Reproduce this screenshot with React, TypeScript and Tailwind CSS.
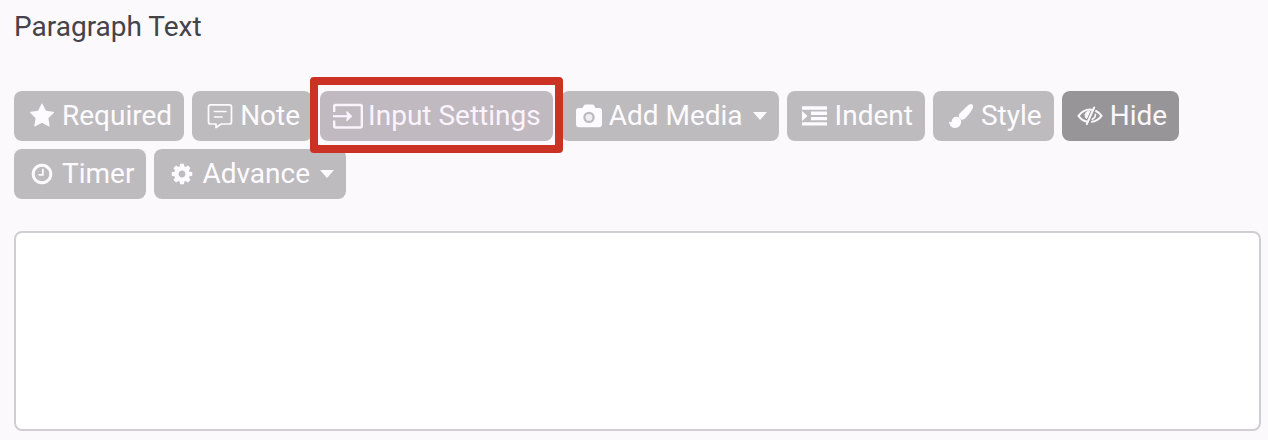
import type { ReactNode } from 'react';

type Tool = {
  label: string;
  icon: ReactNode;
  menu?: boolean;
  active?: boolean;
  highlighted?: boolean;
};

const StarIcon = (
  <svg viewBox="0 0 1664 1792" className="h-[26px] w-6" fill="currentColor" aria-hidden="true">
    <path d="M1664 647q0 22-26 48l-363 354 86 500q1 7 1 20 0 21-10.5 35.5t-30.5 14.5q-19 0-40-12l-449-236-449 236q-22 12-40 12-21 0-31.5-14.5t-10.5-35.5q0-6 2-20l86-500-364-354q-25-27-25-48 0-37 56-46l502-73 225-455q19-41 49-41t49 41l225 455 502 73q56 9 56 46z" />
  </svg>
);

const NoteIcon = (
  <svg viewBox="0 0 26 26" className="size-[26px]" fill="none" stroke="currentColor" strokeWidth="1.7" strokeLinejoin="round" strokeLinecap="round" aria-hidden="true">
    <path d="M3.500 1.800h19a2 2 0 0 1 2 2v15.200a2 2 0 0 1-2 2h-8.300l-5.200 3.500v-3.500h-5.500a2 2 0 0 1-2-2v-15.200a2 2 0 0 1 2-2z" />
    <path d="M7.500 8.500h11.500M7.500 14h7.500" />
  </svg>
);

const InputIcon = (
  <svg viewBox="0 0 32 26" className="h-[26px] w-8" fill="none" stroke="currentColor" strokeWidth="2.400" strokeLinejoin="round" aria-hidden="true">
    <path d="M2.200 9v-5.500a1.500 1.500 0 0 1 1.500-1.500h24.600a1.500 1.500 0 0 1 1.500 1.500v19.500a1.500 1.500 0 0 1-1.500 1.500h-24.600a1.500 1.500 0 0 1-1.500-1.500v-5.500" />
    <path d="M1 13.200h15" strokeWidth="2.200" />
    <path d="M14.800 8.800l4.700 4.400-4.700 4.400 1-4.400z" fill="currentColor" strokeWidth="1.200" />
  </svg>
);

const CameraIcon = (
  <svg viewBox="0 0 26 24" className="h-6 w-[26px]" aria-hidden="true">
    <path
      fill="currentColor"
      fillRule="evenodd"
      d="M3 4h3.500l1.200-2.300q.6-1.200 2-1.200h6.600q1.400 0 2 1.200l1.200 2.300h3.500q3 0 3 3v13.300q0 3-3 3h-20q-3 0-3-3v-13.300q0-3 3-3zm10 3.700a5.700 5.700 0 1 0 0 11.400a5.700 5.700 0 1 0 0-11.400z"
    />
    <circle cx="13" cy="13.400" r="3.400" fill="currentColor" fillOpacity="0.8" />
  </svg>
);

const IndentIcon = (
  <svg viewBox="0 0 25 20" className="h-5 w-[25px]" fill="currentColor" aria-hidden="true">
    <path d="M0 .3h25v3.400h-25zM9 5.600h16v3.400h-16zM9 10.900h16v3.400h-16zM0 16.200h25v3.400h-25zM0 5l5.500 5-5.500 5z" />
  </svg>
);

const BrushIcon = (
  <svg viewBox="0 0 24 24" className="size-6" fill="currentColor" aria-hidden="true">
    <path d="M23.200.6q1.500 1.400.4 4-2 4.500-7 9.500-2 2-4 1.600-2.800-.7-3-3.400 0-1.700 1.500-3.300l7.400-7.300q3-2.600 4.700-1.100z" />
    <path d="M7.500 12.800q4 .9 4.700 4.200-.2 7-6.500 7-5 0-5.700-6.500 1.600 1.300 2.500.5.700-5.300 5-5.200z" />
  </svg>
);

const HiddenIcon = (
  <svg viewBox="0 0 26 20" className="h-5 w-[26px]" fill="none" stroke="currentColor" strokeWidth="2" strokeLinecap="round" aria-hidden="true">
    <path d="M9.500 15.500q-4.800-1.200-8-5.700 4.800-6.200 11.500-6.200 1.600 0 3 .4" />
    <path d="M19 5q3.200 1.600 5.500 4.800-3.600 5-9.500 6" />
    <path d="M17.200 1.500l-7.400 16.500" />
    <path d="M12.500 5q-4.300.4-4.500 4.200 0 2 1.500 3.500l3.500-7.700z" fill="currentColor" strokeWidth="1" />
    <path d="M18.500 8.300q0 3.500-3.200 5" strokeWidth="1.600" />
  </svg>
);

const ClockIcon = (
  <svg viewBox="0 0 1792 1792" className="size-6" fill="currentColor" aria-hidden="true">
    <path d="M1024 544v448q0 14-9 23t-23 9h-320q-14 0-23-9t-9-23v-64q0-14 9-23t23-9h224v-352q0-14 9-23t23-9h64q14 0 23 9t9 23zm416 352q0-148-73-273t-198-198-273-73-273 73-198 198-73 273 73 273 198 198 273 73 273-73 198-198 73-273zm224 0q0 209-103 385.500t-279.500 279.500-385.500 103-385.500-103-279.500-279.500-103-385.500 103-385.500 279.500-279.500 385.500-103 385.500 103 279.500 279.500 103 385.500z" />
  </svg>
);

const GearIcon = (
  <svg viewBox="0 0 1792 1792" className="size-6" fill="currentColor" aria-hidden="true">
    <path d="M1152 896q0-106-75-181t-181-75-181 75-75 181 75 181 181 75 181-75 75-181zm512-109v222q0 12-8 23t-20 13l-185 28q-19 54-39 91 35 50 107 138 10 12 10 25t-9 23q-27 37-99 108t-94 71q-12 0-26-9l-138-108q-44 23-91 38-16 136-29 186-7 28-36 28h-222q-14 0-24.500-8.500t-11.500-21.500l-28-184q-49-16-90-37l-141 107q-10 9-25 9-14 0-25-11-126-114-165-168-7-10-7-23 0-12 8-23 15-21 51-66.500t54-70.500q-27-50-41-99l-183-27q-13-2-21-12.500t-8-23.500v-222q0-12 8-23t19-13l186-28q14-46 39-92-40-57-107-138-10-12-10-24 0-10 9-23 26-36 98.500-107.500t94.500-71.500q13 0 26 10l138 107q44-23 91-38 16-136 29-186 7-28 36-28h222q14 0 24.500 8.500t11.500 21.500l28 184q49 16 90 37l142-107q9-9 24-9 13 0 25 10 129 119 165 170 7 8 7 22 0 12-8 23-15 21-51 66.500t-54 70.500q26 50 41 98l183 28q13 2 21 12.500t8 23.500z" />
  </svg>
);

const tools: Tool[] = [
  { label: 'Required', icon: StarIcon },
  { label: 'Note', icon: NoteIcon },
  { label: 'Input Settings', icon: InputIcon, highlighted: true },
  { label: 'Add Media', icon: CameraIcon, menu: true },
  { label: 'Indent', icon: IndentIcon },
  { label: 'Style', icon: BrushIcon },
  { label: 'Hide', icon: HiddenIcon, active: true },
  { label: 'Timer', icon: ClockIcon },
  { label: 'Advance', icon: GearIcon, menu: true },
];

function toolColors(tool: Tool) {
  if (tool.active) return 'bg-[#979597] text-[#fbf8fd]';
  if (tool.highlighted) return 'bg-[#c1b9c0] text-[#fbf3fd]';
  return 'bg-[#bdbbbe] text-[#fdfbff]';
}

function ToolButton({ tool }: { tool: Tool }) {
  return (
    <div className="relative">
      <button
        type="button"
        aria-haspopup={tool.menu ? 'menu' : undefined}
        className={`flex h-[50px] items-center rounded-lg px-3 text-[28px] leading-8 ${toolColors(tool)}`}
      >
        <span className="mr-1 flex w-8 justify-center">{tool.icon}</span>
        {tool.label}
        {tool.menu && (
          <svg viewBox="0 0 14 8" className="ml-2.5 h-2 w-3.5" fill="currentColor" aria-hidden="true">
            <path d="M0 0h14l-7 8z" />
          </svg>
        )}
      </button>
      {tool.highlighted && (
        <span className="pointer-events-none absolute -top-3.5 -right-2.5 -bottom-3 -left-2.5 z-10 rounded border-8 border-[#cb3224]" />
      )}
    </div>
  );
}

export default function App() {
  return (
    <main className="min-h-screen bg-[#fbf9fc] pt-[11px] pr-[7px] pb-2 pl-3.5 font-['Roboto',sans-serif]">
      <label htmlFor="paragraph" className="block text-[28px] leading-8 text-[#454347]">
        Paragraph Text
      </label>

      {/* Toolbar */}
      <div className="mt-12 flex flex-wrap gap-2">
        {tools.map((tool) => (
          <ToolButton key={tool.label} tool={tool} />
        ))}
      </div>

      <textarea
        id="paragraph"
        className="mt-8 block h-[200px] w-full resize-none rounded-lg border-2 border-[#d0ced2] bg-white p-3 text-[28px] leading-8 text-[#454347] focus:outline-none"
      />
    </main>
  );
}
